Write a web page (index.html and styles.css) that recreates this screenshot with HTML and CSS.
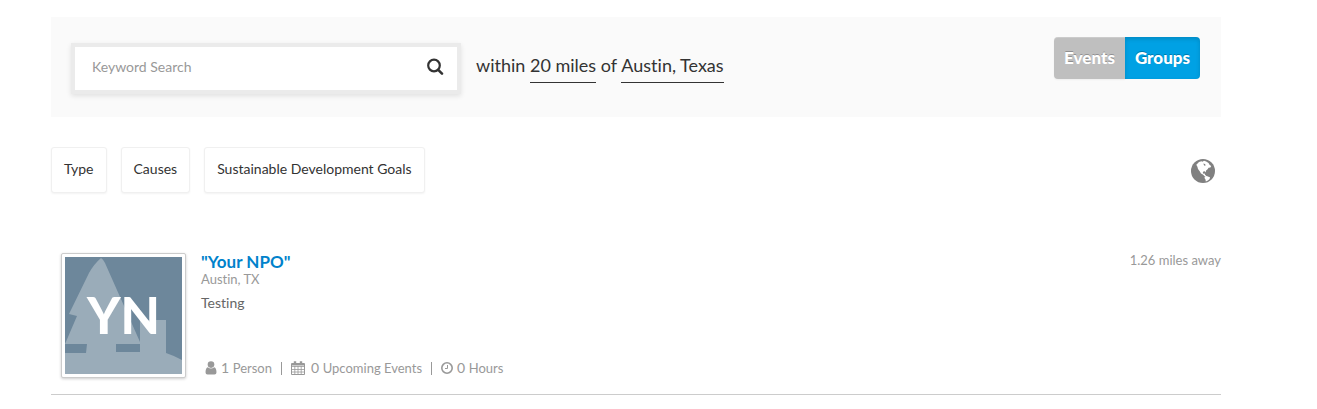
FILE: index.html
```html
<!DOCTYPE html>
<html lang="en">
<head>
    <meta charset="UTF-8">
    <meta name="viewport" content="width=device-width, initial-scale=1.0">
    <title>Find Groups</title>
    <link rel="stylesheet" href="styles.css">
</head>
<body>
    <div class="container">
        <form class="search-bar">
            <div class="search-box">
                <input type="text" placeholder="Keyword Search" aria-label="Keyword Search">
                <button type="submit" class="search-button" aria-label="Search">
                    <svg width="18" height="18" viewBox="0 0 18 18" fill="none" stroke="#333">
                        <circle cx="8" cy="7.5" r="5.8" stroke-width="2.2"/>
                        <path d="M12.200 11.800l3.800 3.800" stroke-width="2.600" stroke-linecap="round"/>
                    </svg>
                </button>
            </div>
            <div class="location">within <a href="#">20 miles</a> of <a href="#">Austin, Texas</a></div>
            <div class="toggle">
                <button type="button">Events</button>
                <button type="button" class="active">Groups</button>
            </div>
        </form>

        <div class="filters">
            <button type="button">Type</button>
            <button type="button">Causes</button>
            <button type="button">Sustainable Development Goals</button>
            <a href="#" class="map-link" aria-label="Map">
                <svg width="24" height="24" viewBox="0 0 24 24">
                    <circle cx="12" cy="12" r="12" fill="#808080"/>
                    <path fill="#fff" d="M5.300 5.800L8 3l2.500-.8 1 .6L13 1.800l2.200.7 2.300 1.400 1.200 2 1.500 1.200-.8 1.500-1.800.2-1 1.500-1.500 1.200-.5 2-.8-1.300-1.500.2-.6 1.500 1 .9 1-.4.3 1.400 1.200.9.2 1.200-2-.9-1.500-1.600-1.900-.8-1.300-2.300-1.700-2.200-.6-2.300z"/>
                    <path fill="#fff" d="M13.800 17.500l2-.5 1.700.8 1.500.5-.4 1.600-1.700 1.700-2.100 1-.3-2.100-1-1.400z"/>
                    <path fill="#808080" d="M12.300 4.600l1.600.3.900 1.400-1.500.5z"/>
                </svg>
            </a>
        </div>

        <div class="group">
            <a href="#" class="avatar" aria-label="Your NPO">
                <svg viewBox="0 0 117 117">
                    <rect width="117" height="117" fill="#6d879b"/>
                    <path fill="#9aacb9" d="M36 1q2 1 4 5l35 79v11h-24v-8h24V63h26v33q9 3 16 7v14H0V96h21l1-9H0l12-28-8-2 20-41q5-9 12-15z"/>
                    <path fill="#6d879b" d="M51 87h24v8H51z"/>
                </svg>
                <span>YN</span>
            </a>
            <div class="details">
                <h3><a href="#">"Your NPO"</a></h3>
                <div class="city">Austin, TX</div>
                <p>Testing</p>
                <ul class="stats">
                    <li>
                        <svg width="12" height="14" viewBox="0 0 12 14" fill="#999">
                            <circle cx="6" cy="3.6" r="3.3"/>
                            <path d="M2.800 6.200Q6 9 9.200 6.200q2.100.5 2.300 5Q11.500 13.500 9.500 13.500h-7Q.5 13.500.5 11.200q.2-4.500 2.300-5z"/>
                        </svg>
                        <span>1 <small>Person</small></span>
                    </li>
                    <li>
                        <svg class="calendar" width="14" height="14" viewBox="0 0 14 14" fill="none" stroke="#999">
                            <path d="M.5 2.500h13v11H.5z"/>
                            <path d="M.5 5.500h13M.5 8.500h13M.5 11h13M3.800 5v8.500M7 5v8.500M10.200 5v8.500" stroke-width=".8"/>
                            <path d="M1 3.500h12" stroke-width="2"/>
                            <path d="M4 .3v3M10 .3v3" stroke-width="2.400"/>
                        </svg>
                        <span>0 <small>Upcoming Events</small></span>
                    </li>
                    <li>
                        <svg width="12" height="12" viewBox="0 0 12 12" fill="none" stroke="#999">
                            <circle cx="6" cy="6" r="5.200" stroke-width="1.600"/>
                            <path d="M6.500 3v3.500H4"/>
                        </svg>
                        <span>0 <small>Hours</small></span>
                    </li>
                </ul>
            </div>
            <div class="distance">1.26 miles away</div>
        </div>
    </div>
</body>
</html>
```
FILE: styles.css
```css
body {
    font-family: Lato, "Liberation Sans", sans-serif;
    font-size: 14px;
    font-variant-ligatures: none;
    line-height: 20px;
    color: #333;
    background-color: #fff;
    margin: 0;
}
a {
    text-decoration: none;
}
button {
    font-family: inherit;
    font-variant-ligatures: none;
    cursor: pointer;
}
.container {
    max-width: 1170px;
    margin: 17px 96px 0 51px;
}
.search-bar {
    display: flex;
    align-items: flex-start;
    height: 100px;
    padding: 20px;
    box-sizing: border-box;
    background-color: #fafafa;
}
.search-box {
    display: flex;
    align-items: center;
    width: 390px;
    height: 51px;
    margin-top: 6px;
    padding: 0 13px 4px 17px;
    box-sizing: border-box;
    background-color: #fff;
    border: 4px solid #ebebeb;
    box-shadow: 0 2px 5px rgba(0, 0, 0, 0.1);
}
.search-box input {
    flex-grow: 1;
    padding: 0;
    border: none;
    outline: none;
    background: none;
    font-family: inherit;
    font-size: 14px;
    color: #333;
}
.search-box input::placeholder {
    color: #999;
}
.search-button {
    display: flex;
    padding: 0;
    border: none;
    background: none;
}
.location {
    margin: 16px 0 0 15px;
    font-size: 18px;
    line-height: 24px;
}
.location a {
    display: inline-block;
    padding-bottom: 5px;
    color: #333;
    border-bottom: 1px solid #333;
}
.toggle {
    display: flex;
    margin: 0 1px 0 auto;
}
.toggle button {
    height: 42px;
    padding: 0 10px 2px;
    border: none;
    border-radius: 4px 0 0 4px;
    background-color: #bfbfbf;
    color: #fff;
    font-size: 17px;
    font-weight: 900;
    text-shadow: 0 -1px 0 rgba(0, 0, 0, 0.25);
    box-shadow: inset 0 1px 0 rgba(255, 255, 255, 0.2), 0 1px 2px rgba(0, 0, 0, 0.05);
}
.toggle .active {
    border-radius: 0 4px 4px 0;
    background-color: #00a1e4;
    box-shadow: inset 0 2px 4px rgba(0, 0, 0, 0.15);
}
.filters {
    display: flex;
    gap: 14px;
    margin-top: 30px;
}
.filters button {
    height: 46px;
    padding: 0 12px 3px;
    background-color: #fff;
    border: 1px solid #f0f0f0;
    border-radius: 3px;
    box-shadow: 0 1px 2px rgba(0, 0, 0, 0.05);
    color: #333;
    font-size: 14px;
}
.map-link {
    display: flex;
    align-items: center;
    margin: 2px 6px 0 auto;
}
.group {
    display: flex;
    align-items: flex-start;
    margin-top: 60px;
    padding: 0 0 16px 10px;
    border-bottom: 1px solid #ccc;
}
.avatar {
    position: relative;
    width: 117px;
    height: 117px;
    padding: 3px;
    background-color: #fff;
    border: 1px solid #ccc;
    border-radius: 2px;
    box-shadow: 0 1px 3px rgba(0, 0, 0, 0.2);
}
.avatar svg {
    display: block;
}
.avatar span {
    position: absolute;
    top: 0;
    right: 0;
    bottom: 0;
    left: 0;
    color: #fff;
    font-size: 51px;
    font-weight: 900;
    line-height: 122px;
    text-align: center;
}
.details {
    flex-grow: 1;
    margin-left: 15px;
}
.details h3 {
    margin: 0;
    font-size: 17px;
    line-height: 17px;
}
.details h3 a {
    color: #0082cb;
}
.city {
    color: #999;
    font-size: 13px;
    line-height: 18px;
}
.details p {
    margin: 5px 0 0;
    color: #666;
}
.stats {
    display: flex;
    margin: 45px 0 0 4px;
    padding: 0;
    list-style: none;
    color: #999;
}
.stats li {
    display: flex;
    align-items: center;
    gap: 4px;
}
.stats li + li::before {
    content: "";
    width: 1px;
    height: 13px;
    margin: 0 5px 0 9px;
    background-color: #999;
}
.stats .calendar {
    margin-right: 2px;
}
.stats small {
    font-size: 13px;
}
.distance {
    color: #999;
    font-size: 13px;
    line-height: 14px;
}
```
